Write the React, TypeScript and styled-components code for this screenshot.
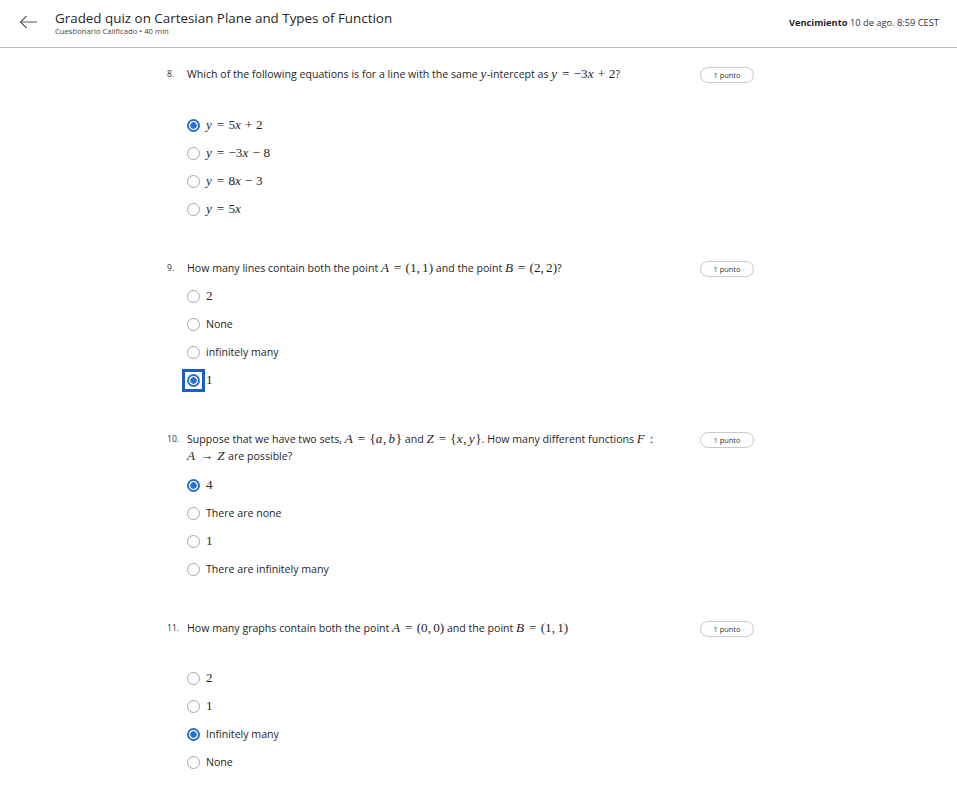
import React from 'react';
import styled, {createGlobalStyle} from "styled-components";

const GlobalStyle = createGlobalStyle`
  html, body {
    margin: 0;
    padding: 0;
    background: #ffffff;
  }
  body {
    font-family: "Open Sans", "Noto Sans", sans-serif;
    color: #1f1f1f;
  }
`

type Opt = { label: React.ReactNode; selected?: boolean; focused?: boolean };

const App = () => {
    return (
        <>
            <GlobalStyle/>
            <Header>
                <BackButton type="button" aria-label="Volver">
                    <svg width="19" height="14" viewBox="0 0 19 14" fill="none">
                        <path d="M18 7H1.5M7.5 1L1.5 7L7.5 13" stroke="#5b5b5b" strokeWidth="1.1"/>
                    </svg>
                </BackButton>
                <TitleBlock>
                    <Title>Graded quiz on Cartesian Plane and Types of Function</Title>
                    <Subtitle>Cuestionario Calificado • 40 min</Subtitle>
                </TitleBlock>
                <Due><b>Vencimiento</b> 10 de ago. 8:59 CEST</Due>
            </Header>
            <Main>
                <Question
                    num="8."
                    gap={28}
                    text={<>Which of the following equations is for a line with the same <M><I>y</I></M>-intercept as <M><I>y</I><Rel>=</Rel>−3<I>x</I><Bin>+</Bin>2</M>?</>}
                    options={[
                        {label: <M><I>y</I><Rel>=</Rel>5<I>x</I><Bin>+</Bin>2</M>, selected: true},
                        {label: <M><I>y</I><Rel>=</Rel>−3<I>x</I><Bin>−</Bin>8</M>},
                        {label: <M><I>y</I><Rel>=</Rel>8<I>x</I><Bin>−</Bin>3</M>},
                        {label: <M><I>y</I><Rel>=</Rel>5<I>x</I></M>},
                    ]}
                />
                <Question
                    num="9."
                    gap={5}
                    text={<>How many lines contain both the point <M><I>A</I><Rel>=</Rel>(1,<Sp/>1)</M> and the point <M><I>B</I><Rel>=</Rel>(2,<Sp/>2)</M>?</>}
                    options={[
                        {label: <M>2</M>},
                        {label: "None"},
                        {label: "infinitely many"},
                        {label: <M>1</M>, selected: true, focused: true},
                    ]}
                />
                <Question
                    num="10."
                    gap={6}
                    text={<>Suppose that we have two sets, <M><I>A</I><Rel>=</Rel>{"{"}<I>a</I>,<Sp/><I>b</I>{"}"}</M> and <M><I>Z</I><Rel>=</Rel>{"{"}<I>x</I>,<Sp/><I>y</I>{"}"}</M>. How many different functions <M><I>F</I><Rel>:</Rel></M> <M><I>A</I><Rel>→</Rel><I>Z</I></M> are possible?</>}
                    options={[
                        {label: <M>4</M>, selected: true},
                        {label: "There are none"},
                        {label: <M>1</M>},
                        {label: "There are infinitely many"},
                    ]}
                />
                <Question
                    num="11."
                    gap={27}
                    text={<>How many graphs contain both the point <M><I>A</I><Rel>=</Rel>(0,<Sp/>0)</M> and the point <M><I>B</I><Rel>=</Rel>(1,<Sp/>1)</M></>}
                    options={[
                        {label: <M>2</M>},
                        {label: <M>1</M>},
                        {label: "Infinitely many", selected: true},
                        {label: "None"},
                    ]}
                />
            </Main>
        </>
    );
};

const Question = (props: { num: string; text: React.ReactNode; options: Opt[]; gap: number }) => {
    return (
        <QuestionWrap>
            <QuestionHead>
                <Num>{props.num}</Num>
                <QText>{props.text}</QText>
                <Points>1 punto</Points>
            </QuestionHead>
            <Options $gap={props.gap}>
                {props.options.map((o, i) => (
                    <OptionRow key={i}>
                        <RadioFocus $focused={!!o.focused}>
                            <Radio $selected={!!o.selected}/>
                        </RadioFocus>
                        <OptionLabel>{o.label}</OptionLabel>
                    </OptionRow>
                ))}
            </Options>
        </QuestionWrap>
    );
};

export default App;

const Header = styled.header`
  display: flex;
  align-items: flex-start;
  height: 47px;
  border-bottom: 1px solid #bcbcbc;
  padding: 0 18px 0 19px;
  box-sizing: content-box;
`

const BackButton = styled.button`
  display: flex;
  align-items: center;
  justify-content: center;
  background: transparent;
  border: none;
  padding: 0;
  margin-top: 15px;
  width: 19px;
  height: 14px;
  cursor: pointer;
`

const TitleBlock = styled.div`
  display: flex;
  flex-direction: column;
  margin-left: 17px;
  padding-top: 9px;
`

const Title = styled.h1`
  margin: 0;
  font-size: 13.4px;
  line-height: 18px;
  font-weight: 400;
  color: #1f1f1f;
`

const Subtitle = styled.div`
  font-size: 7.7px;
  line-height: 10px;
  margin-top: -1px;
  color: #444;
`

const Due = styled.div`
  margin-left: auto;
  padding-top: 17px;
  font-size: 9.3px;
  line-height: 12px;
  color: #333;
  b {
    font-weight: 700;
    color: #1f1f1f;
  }
`

const Main = styled.main`
  padding: 18px 0 40px 167px;
  width: 587px;
`

const QuestionWrap = styled.section`
  margin-bottom: 37px;
  &:last-child {
    margin-bottom: 0;
  }
`

const QuestionHead = styled.div`
  display: grid;
  grid-template-columns: 20px 1fr 54px;
  column-gap: 14px;
  align-items: start;
  width: 587px;
`

const Num = styled.span`
  font-size: 8.6px;
  line-height: 17px;
  color: #333;
`

const QText = styled.p`
  margin: 0 0 0 -14px;
  font-size: 10.6px;
  line-height: 17px;
  color: #1f1f1f;
`

const Points = styled.span`
  display: flex;
  align-items: center;
  justify-content: center;
  height: 14px;
  margin-top: 1px;
  border: 1px solid #c9c9c9;
  border-radius: 8px;
  font-size: 7.4px;
  color: #333;
`

const Options = styled.div<{$gap: number}>`
  display: flex;
  flex-direction: column;
  margin-top: ${props => props.$gap}px;
  padding-left: 20px;
`

const OptionRow = styled.label`
  display: flex;
  align-items: center;
  height: 28px;
  gap: 6px;
`

const RadioFocus = styled.span<{$focused: boolean}>`
  display: flex;
  align-items: center;
  justify-content: center;
  width: 13px;
  height: 13px;
  box-shadow: ${props => props.$focused ? "0 0 0 2px #fff, 0 0 0 5px #1f5fc4" : "none"};
`

const Radio = styled.span<{$selected: boolean}>`
  display: block;
  box-sizing: border-box;
  width: 13px;
  height: 13px;
  border-radius: 50%;
  border: ${props => props.$selected ? "2px solid #2a6fd0" : "1px solid #a6a6a6"};
  background: ${props => props.$selected ? "radial-gradient(circle, #2a6fd0 0 3px, #fff 3.4px)" : "#fff"};
`

const OptionLabel = styled.span`
  font-size: 10.6px;
  line-height: 14px;
  color: #1f1f1f;
`

const M = styled.span`
  font-family: "Liberation Serif", "DejaVu Serif", serif;
  font-size: 13.2px;
  line-height: 10px;
  color: #1f1f1f;
  white-space: nowrap;
`

const I = styled.i`
  font-style: italic;
  margin-right: 0.05em;
`

const Rel = styled.span`
  margin: 0 0.32em;
`

const Bin = styled.span`
  margin: 0 0.27em;
`

const Sp = styled.span`
  display: inline-block;
  width: 0.17em;
`
